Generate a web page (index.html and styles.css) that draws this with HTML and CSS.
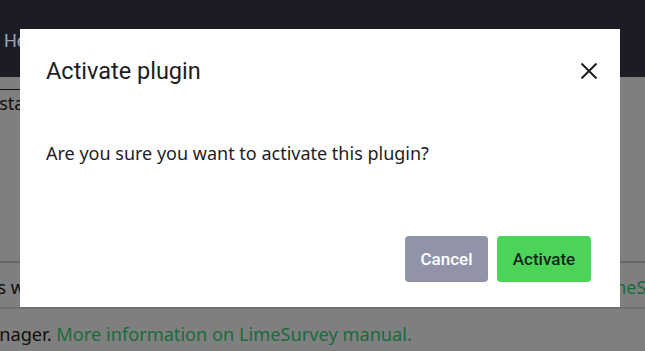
FILE: index.html
```html
<!DOCTYPE html>
<html lang="en">
<head>
    <meta charset="UTF-8">
    <meta name="viewport" content="width=device-width, initial-scale=1.0">
    <title>Plugins</title>
    <link rel="stylesheet" href="styles.css">
</head>
<body>
    <nav class="navbar">
        <span class="nav-item">Help</span>
    </nav>

    <main class="page">
        <div class="tabs">
            <span class="tab active">Installed</span>
        </div>
        <div class="plugin-row">
            <span class="row-text">Plugins will be listed here</span>
            <a href="#" class="row-link">LimeSurvey</a>
        </div>
        <p class="page-note">manager. <a href="#">More information on LimeSurvey manual.</a></p>
    </main>

    <div class="backdrop"></div>

    <div class="modal" role="dialog">
        <div class="modal-header">
            <h2>Activate plugin</h2>
            <button class="close-button" aria-label="Close">
                <svg width="16" height="16" viewBox="0 0 16 16">
                    <path d="M0.5 0.5 L15.5 15.5 M15.5 0.5 L0.5 15.5" stroke="#1d1d1f" stroke-width="2" fill="none"/>
                </svg>
            </button>
        </div>
        <div class="modal-body">
            <p>Are you sure you want to activate this plugin?</p>
        </div>
        <div class="modal-footer">
            <button class="btn btn-cancel">Cancel</button>
            <button class="btn btn-activate">Activate</button>
        </div>
    </div>
</body>
</html>
```
FILE: styles.css
```css
* {
    margin: 0;
    padding: 0;
    box-sizing: border-box;
}

body {
    font-family: "Noto Sans", Arial, sans-serif;
    background: #fff;
    color: #1e1e1e;
    overflow: hidden;
}

.navbar {
    position: relative;
    z-index: 20;
    height: 77px;
    background: #1b1c24;
    display: flex;
    align-items: center;
    padding-left: 4px;
}

.nav-item {
    font-family: Roboto, Arial, sans-serif;
    font-size: 18px;
    color: #a3a4aa;
    margin-top: 4px;
}

.page {
    padding-top: 12px;
}

.tabs {
    height: 172px;
}

.tab {
    display: inline-block;
    margin-left: -32px;
    padding: 0 14px 2px;
    border-top: 1px solid #222;
    font-size: 18px;
    line-height: 26px;
    color: #222;
}

.plugin-row {
    display: flex;
    justify-content: space-between;
    align-items: center;
    height: 48px;
    padding-top: 3px;
    border-top: 2px solid #cfcfcf;
    border-bottom: 2px solid #dedede;
    font-size: 18px;
    overflow: hidden;
    white-space: nowrap;
}

.row-text {
    margin-left: -56px;
}

.row-link {
    color: #36d67b;
    text-decoration: none;
    margin-right: -48px;
}

.page-note {
    font-size: 18.2px;
    line-height: 50px;
    margin-left: -28px;
    white-space: nowrap;
}

.page-note a {
    color: #36d67b;
    text-decoration: none;
}

.backdrop {
    position: fixed;
    inset: 0;
    z-index: 10;
    background: rgba(0, 0, 0, 0.5);
}

.modal {
    position: fixed;
    top: 29px;
    left: 20px;
    z-index: 30;
    width: 600px;
    height: 278px;
    background: #fff;
    display: flex;
    flex-direction: column;
}

.modal-header {
    display: flex;
    justify-content: space-between;
    align-items: center;
    padding: 26px 19px 0 26px;
}

.modal-header h2 {
    font-family: Roboto, Arial, sans-serif;
    font-weight: 400;
    font-size: 23.5px;
    line-height: 32px;
    color: #1d1d1f;
}

.close-button {
    border: none;
    background: none;
    width: 24px;
    height: 24px;
    display: flex;
    align-items: center;
    justify-content: center;
    cursor: pointer;
}

.modal-body {
    flex: 1;
    padding: 52px 26px 0;
}

.modal-body p {
    font-size: 18px;
    line-height: 28px;
    color: #1d1d1f;
}

.modal-footer {
    display: flex;
    justify-content: flex-end;
    gap: 9px;
    padding: 0 29px 25px;
}

.btn {
    height: 46px;
    border: none;
    border-radius: 4px;
    font-family: Roboto, Arial, sans-serif;
    font-size: 17px;
    font-weight: 500;
    cursor: pointer;
}

.btn-cancel {
    width: 83px;
    background: #9194a8;
    color: #fff;
}

.btn-activate {
    width: 94px;
    background: #4cd459;
    color: #14261a;
}
```
